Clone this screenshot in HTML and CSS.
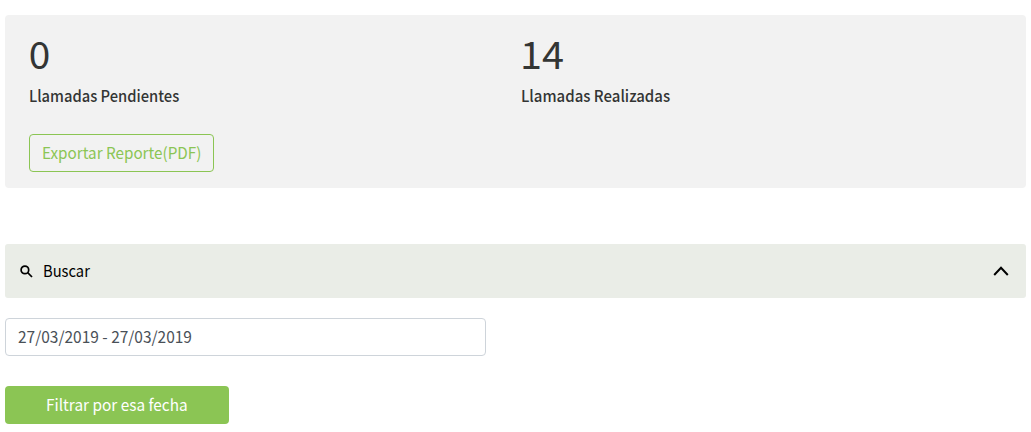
FILE: index.html
```html
<!DOCTYPE html>
<html lang="es">
<head>
<meta charset="utf-8">
<title>Llamadas</title>
<link rel="stylesheet" href="styles.css">
</head>
<body>
<main class="page">
  <section class="summary">
    <div class="stat">
      <div class="number"><span class="fit n-pending">0</span></div>
      <div class="label"><span class="fit l-pending">Llamadas Pendientes</span></div>
      <button class="export"><span class="fit t-export">Exportar Reporte(PDF)</span></button>
    </div>
    <div class="stat">
      <div class="number"><span class="fit n-done">14</span></div>
      <div class="label"><span class="fit l-done">Llamadas Realizadas</span></div>
    </div>
  </section>
  <div class="search">
    <svg class="glass" viewBox="0 0 13 13"><circle cx="4.9" cy="4.9" r="3.8"/><path d="M7.7 7.7 12 12"/></svg>
    <span class="fit t-search">Buscar</span>
    <svg class="chevron" viewBox="0 0 16 10"><path d="M1.2 9 8 1.8 14.8 9"/></svg>
  </div>
  <div class="range"><span class="fit t-range">27/03/2019 - 27/03/2019</span></div>
  <button class="filter"><span class="fit t-filter">Filtrar por esa fecha</span></button>
</main>
</body>
</html>
```
FILE: styles.css
```css
* { box-sizing: border-box; }
body { margin: 0; background: #fff; color: #333534; font: 16px/24px "Noto Sans CJK JP", sans-serif; }
.page { padding: 15px 5px 0; }
.fit { display: inline-block; transform-origin: 0 50%; white-space: nowrap; }
.n-pending { transform: translate(-0.3px, -2px) scale(.97, .96); }
.n-done { transform: translate(-1px, -2px) scale(.99, .96); }
.l-pending { transform: translateY(-1px) scaleX(.92); }
.l-done { transform: translateY(-1px) scaleX(.937); }
.t-export { transform: translateY(-1px) scaleX(.953); }
.t-search { transform: translateY(-1px) scaleX(.92); }
.t-range { transform: translateY(-1px) scaleX(.967); }
.t-filter { transform: translateY(-1px) scaleX(.96); }
.summary { display: grid; grid-template-columns: 491.5px 1fr; height: 173px; padding: 18px 24px 0; background: #f2f2f2; border-radius: 4px; }
.number { height: 44px; font-size: 40px; line-height: 44px; }
.label { margin-top: 7px; height: 24px; font-weight: 500; }
.export { display: block; width: 185px; height: 38px; margin-top: 26px; padding: 0 12px; border: 1px solid #8bc554; border-radius: 4px; background: transparent; color: #8bc554; font: inherit; text-align: left; }
.search { display: flex; align-items: center; height: 54px; margin-top: 56px; padding: 0 17px 0 15px; background: #eaede7; border-radius: 3px; color: #000; }
.glass { width: 13px; height: 13px; margin-right: 10px; fill: none; stroke: #000; stroke-width: 1.7; }
.chevron { width: 16px; height: 10px; margin-left: auto; fill: none; stroke: #000; stroke-width: 2; }
.range { width: 481px; height: 38px; margin-top: 20px; padding: 6px 12px; border: 1px solid #ced4da; border-radius: 4px; color: #495057; }
.filter { display: block; width: 224px; height: 38px; margin-top: 30px; padding: 0 0 0 41px; border: 0; border-radius: 4px; background: #8bc554; color: #fff; font: inherit; text-align: left; }
```
